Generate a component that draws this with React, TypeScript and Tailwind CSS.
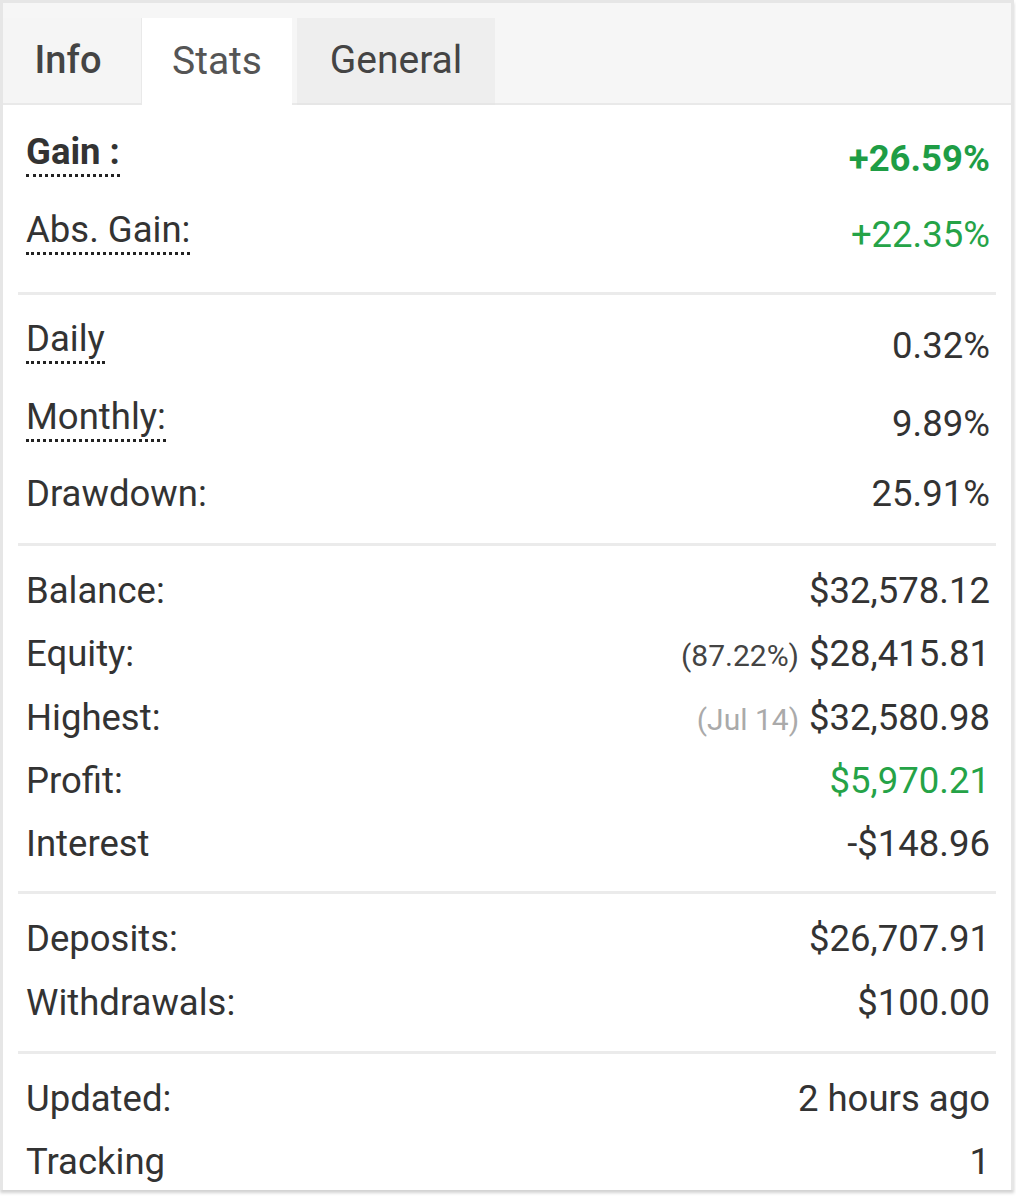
import React from "react";

type RowProps = {
  label: string;
  value: React.ReactNode;
  note?: React.ReactNode;
  underline?: boolean;
  bold?: boolean;
  valueClass?: string;
  height: string;
  drop?: string;
};

function Row({ label, value, note, underline, bold, valueClass, height, drop }: RowProps) {
  return (
    <div className={`flex items-start justify-between pl-[8px] pr-[6px] ${height}`}>
      <span
        className={`leading-[44px] ${bold ? "font-bold" : ""} ${
          underline ? "border-b-[3px] border-dotted border-[#222]" : ""
        }`}
      >
        {label}
      </span>
      <span className={`leading-[44px] whitespace-nowrap ${drop ?? ""} ${valueClass ?? "text-[#333]"}`}>
        {note}
        {value}
      </span>
    </div>
  );
}

const Divider = () => <div className="h-[3px] bg-[#ebebeb]" />;

export default function App() {
  return (
    <div className="min-h-[1200px] bg-white">
      <div
        className="w-[1014px] border-x-[3px] border-t-[3px] border-[#e6e6e6] bg-white shadow-[0_3px_3px_rgba(0,0,0,0.18)] text-[36.5px] text-[#333]"
        style={{ fontFamily: "Roboto, 'Liberation Sans', sans-serif" }}
      >
        {/* Tabs */}
        <div className="flex items-end gap-[5px] h-[102px] bg-[#f6f6f6] border-b-2 border-[#e9e9e9]">
          <div className="w-[139px] h-[87px] -mb-[2px] pr-[8px] flex items-center justify-center bg-[#f5f5f5] border-r border-b-2 border-[#e9e9e9] font-medium text-[38px] text-[#444]">
            Info
          </div>
          <div className="w-[150px] h-[87px] -mb-[2px] -ml-[5px] flex items-center justify-center bg-white text-[39px] text-[#555]">
            Stats
          </div>
          <div className="w-[198px] h-[87px] -mb-[2px] flex items-center justify-center bg-[#eeeeee] border-b-2 border-[#e6e6e6] text-[39px] text-[#444]">
            General
          </div>
        </div>

        <div className="px-[15px]">
          {/* Gain */}
          <div className="pt-[25px]">
            <Row
              label="Gain :"
              bold
              underline
              value="+26.59%"
              valueClass="font-bold text-[#1e9d45]"
              drop="mt-[7px]"
              height="h-[78px]"
            />
            <Row
              label="Abs. Gain:"
              underline
              value="+22.35%"
              valueClass="text-[#25a347]"
              drop="mt-[5px]"
              height="h-[84px]"
            />
          </div>
          <Divider />

          {/* Rates */}
          <div className="pt-[22px]">
            <Row label="Daily" underline value="0.32%" drop="mt-[7px]" height="h-[78px]" />
            <Row label="Monthly:" underline value="9.89%" drop="mt-[7px]" height="h-[77px]" />
            <Row label="Drawdown:" value="25.91%" height="h-[71px]" />
          </div>
          <Divider />

          {/* Money */}
          <div className="pt-[23px]">
            <Row label="Balance:" value="$32,578.12" height="h-[63px]" />
            <Row
              label="Equity:"
              note={<span className="text-[30px] text-[#444] mr-[10px]">(87.22%)</span>}
              value="$28,415.81"
              height="h-[64px]"
            />
            <Row
              label="Highest:"
              note={<span className="text-[30px] text-[#aaaaaa] mr-[10px]">(Jul 14)</span>}
              value="$32,580.98"
              height="h-[63px]"
            />
            <Row label="Profit:" value="$5,970.21" valueClass="text-[#25a347]" height="h-[63px]" />
            <Row label="Interest" value="-$148.96" height="h-[69px]" />
          </div>
          <Divider />

          {/* Transfers */}
          <div className="pt-[23px]">
            <Row label="Deposits:" value="$26,707.91" height="h-[64px]" />
            <Row label="Withdrawals:" value="$100.00" height="h-[70px]" />
          </div>
          <Divider />

          {/* Meta */}
          <div className="pt-[23px]">
            <Row label="Updated:" value="2 hours ago" height="h-[63px]" />
            <Row label="Tracking" value="1" height="h-[50px]" />
          </div>
        </div>
      </div>
    </div>
  );
}
